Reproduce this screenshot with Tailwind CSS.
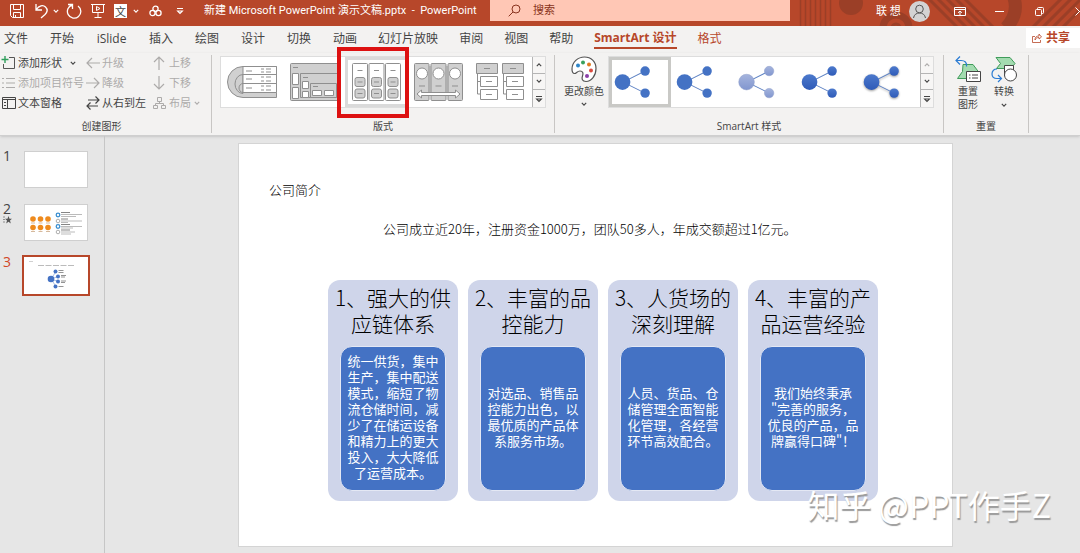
<!DOCTYPE html>
<html lang="zh-CN">
<head>
<meta charset="utf-8">
<title>新建 Microsoft PowerPoint 演示文稿.pptx - PowerPoint</title>
<script src="https://cdn.jsdelivr.net/npm/@tailwindcss/browser@4"></script>
</head>
<body class="relative flex min-h-screen flex-col overflow-x-hidden bg-[#e6e6e6] font-['Open_Sans','Noto_Sans_CJK_SC',sans-serif] text-[#444444]">

<svg class="absolute size-0" aria-hidden="true">
  <defs>
    <symbol id="down" viewBox="0 0 6 6"><path d="M.8 1.8 3 4.2 5.2 1.8" fill="none" stroke="currentColor" stroke-width="1.1"/></symbol>
    <symbol id="up" viewBox="0 0 6 6"><path d="M.8 4.2 3 1.8 5.2 4.2" fill="none" stroke="currentColor" stroke-width="1.1"/></symbol>
    <symbol id="more" viewBox="0 0 8 8"><path d="M1 1.5h6M1.6 4h4.8L4 6.4z" fill="none" stroke="currentColor" stroke-width="1.1"/></symbol>
    <symbol id="nodes" viewBox="0 0 62 50">
      <path d="M14 25 36 14M14 25l22 11" stroke="#5f83c4" stroke-width="1"/>
      <circle cx="13.500" cy="25" r="7.800"/><circle cx="36" cy="14" r="4.700"/><circle cx="36" cy="36" r="4.700"/>
    </symbol>
    <linearGradient id="soft" x1="0" y1="0" x2="0" y2="1"><stop offset="0" stop-color="#a5b4dd"/><stop offset="1" stop-color="#8196cf"/></linearGradient>
    <linearGradient id="deep" x1="0" y1="0" x2="0" y2="1"><stop offset="0" stop-color="#4c79cc"/><stop offset="1" stop-color="#2f5bb8"/></linearGradient>
  </defs>
</svg>

<header class="relative flex h-[26px] items-center overflow-hidden bg-[#b7472a] text-white">
  <svg class="absolute top-0 right-0 h-[26px] w-[290px]" viewBox="0 0 290 26" fill="none" stroke="#9b3f27" aria-hidden="true">
    <path d="M10.500 0v26M15.500 0v26M20.500 0v26M25.500 0v26M30.500 0v26M35.500 0v26M40.500 0v26" stroke-width="1.500"/>
    <circle cx="61" cy="3" r="12" fill="#9b3f27" stroke="none"/>
    <circle cx="106" cy="28" r="13" stroke-width="7"/><circle cx="106" cy="28" r="4" stroke-width="3"/>
    <path d="m138-2 30 30M147-2l30 30M156-2l30 30M165-2l30 30M174-2l30 30" stroke-width="3"/>
    <path d="M224-2q5 16-8 30" stroke-width="13"/>
    <path d="m242 28 30-30M252 28l30-30M262 28l30-30M272 28l30-30" stroke-width="3"/>
  </svg>
  <div class="relative flex w-[490px] shrink-0 items-center pb-[4px] pl-[9px]">
    <button aria-label="保存"><svg class="size-4" viewBox="0 0 16 16" fill="none" stroke="currentColor"><path d="M1.500 1.500h13v13h-11l-2-2zM4.500 1.500v5h7v-5M4.500 14.500v-5h7v5M6.500 12v2.500"/></svg></button>
    <button class="ml-[9px]" aria-label="撤消"><svg class="size-4" viewBox="0 0 16 16" fill="none" stroke="currentColor" stroke-width="1.300"><path d="M2 1v6h6M2.300 6.500C5 2.500 9 1.500 11.500 4s2 5-.5 7.500L7 15"/></svg></button>
    <svg class="ml-[3px] size-[6px]"><use href="#down"/></svg>
    <button class="ml-[7px]" aria-label="重做"><svg class="size-4" viewBox="0 0 16 16" fill="none" stroke="currentColor" stroke-width="1.300"><path d="M2 1.500h4.500V6M6.300 2A6.700 6.700 0 1 0 12 3"/></svg></button>
    <button class="ml-[9px]" aria-label="从头开始"><svg class="h-4 w-[14px]" viewBox="0 0 14 16" fill="none" stroke="currentColor"><path d="M0 1.500h14M1.500 1.500v8h11v-8M7 9.500v5M3.500 14.500h7"/><path d="M5.500 3.500v4L9 5.500z"/></svg></button>
    <button class="ml-[9px] flex h-[14px] w-[13px] items-center justify-center bg-white text-[11px] leading-none text-[#444]" aria-label="翻译">文</button>
    <svg class="ml-[6px] size-[6px]"><use href="#down"/></svg>
    <button class="ml-[10px]" aria-label="合并形状"><svg class="h-[12px] w-[13px]" viewBox="0 0 13 12" fill="none" stroke="currentColor" stroke-width="1.300"><circle cx="6.500" cy="3.700" r="2.600"/><circle cx="3.500" cy="8" r="2.600"/><circle cx="9.500" cy="8" r="2.600"/></svg></button>
    <button class="ml-[14px]" aria-label="自定义快速访问工具栏"><svg class="size-2"><use href="#more"/></svg></button>
    <h1 class="ml-[20px] font-[Roboto,'Noto_Sans_CJK_SC',sans-serif] text-[11px] leading-4 whitespace-nowrap">新建 Microsoft PowerPoint 演示文稿.pptx&nbsp; -&nbsp; PowerPoint</h1>
  </div>
  <label class="relative mb-[5px] flex h-[21px] flex-1 items-center bg-[#ffc7b5] pl-[18px] text-[#8a3420]">
    <svg class="size-[13px]" viewBox="0 0 13 13" fill="none" stroke="currentColor"><circle cx="8" cy="5" r="4"/><path d="M5 8 .7 12.300"/></svg>
    <input class="ml-[12px] min-w-0 flex-1 bg-transparent text-[11px] outline-none placeholder:text-[#8a3420]" type="text" aria-label="搜索" placeholder="搜索">
  </label>
  <div class="relative flex w-[290px] shrink-0 items-center pb-[4px] pl-[86px]">
    <span class="text-[11px] leading-4">联&nbsp;想</span>
    <button class="ml-[8px]" aria-label="账户"><svg class="size-[21px]" viewBox="0 0 21 21" fill="none" stroke="#555"><circle cx="10.500" cy="10.500" r="10.500" fill="#d3d3d3" stroke="none"/><circle cx="10.500" cy="8" r="3.800"/><path d="M4.500 17c.6-3.500 3-5 6-5s5.400 1.500 6 5"/></svg></button>
    <button class="ml-[24px]" aria-label="功能区显示选项"><svg class="h-[9px] w-[12px]" viewBox="0 0 12 9" fill="none" stroke="currentColor"><path d="M.5.5h11v8H.5zM.5 2.500h11M6 8V4M4 5.800 6 4l2 1.800"/></svg></button>
    <button class="ml-[29px]" aria-label="最小化"><svg class="h-[9px] w-[9px]" viewBox="0 0 9 9" stroke="currentColor"><path d="M0 4.500h9"/></svg></button>
    <button class="ml-[31px]" aria-label="还原"><svg class="size-[9px]" viewBox="0 0 9 9" fill="none" stroke="currentColor"><rect x=".5" y="2.500" width="6" height="6" rx="1"/><path d="M2.500 2.500V1.500q0-1 1-1h4q1 0 1 1v4q0 1-1 1h-1"/></svg></button>
    <button class="ml-[31px]" aria-label="关闭"><svg class="size-[9px]" viewBox="0 0 9 9" stroke="currentColor"><path d="m.5.5 8 8M8.500.5l-8 8"/></svg></button>
  </div>
</header>

<nav class="flex h-[27px] items-start justify-between bg-[#f3f2f1] pl-[4px]" aria-label="功能区选项卡">
  <div class="flex gap-[21px] pt-[3px] text-[12px] leading-[18px] whitespace-nowrap">
    <div class="flex gap-[22px]"><button>文件</button><button>开始</button><button class="w-[31px]">iSlide</button><button>插入</button><button>绘图</button><button>设计</button><button>切换</button><button>动画</button></div>
    <button>幻灯片放映</button><button>审阅</button><button>视图</button><button>帮助</button>
    <button class="border-b-2 border-[#b7472a] font-bold text-[#b7472a]">SmartArt 设计</button><button class="text-[#b7472a]">格式</button>
  </div>
  <button class="mt-[2px] flex h-5 w-[54px] items-center gap-[4px] overflow-hidden bg-white pl-[6px] text-[12px] font-bold whitespace-nowrap text-[#b7472a]">
    <svg class="h-[10px] w-[10px] shrink-0" viewBox="0 0 10 10" fill="none" stroke="currentColor"><path d="M3 3.500H.5v6h8V7M3 7c0-3 1.500-4 4-4V1l2.500 3L7 6V4.500C5 4.500 4 5 3 7z" stroke-width=".8"/></svg>共享
  </button>
</nav>

<section class="flex h-[83px] border-b border-[#cfcfcf] bg-[#f3f2f1] text-[11px] leading-4 shadow-sm" aria-label="SmartArt 设计">
  <div class="my-[2px] flex w-[212px] shrink-0 flex-col justify-between border-r border-[#c8c6c4]">
    <div class="grid grid-cols-[86px_67px_auto] gap-y-[4px] whitespace-nowrap">
      <button class="flex items-center gap-[2px]"><svg class="size-4" viewBox="0 0 16 16" fill="none" stroke="#555"><path d="M9 2.500h5.500v11h-11V9"/><path d="M5 1v7M1.500 4.500h7" stroke="#2f9e5b" stroke-width="1.400"/></svg>添加形状<svg class="ml-[6px] size-[6px]"><use href="#down"/></svg></button>
      <button class="flex items-center gap-[2px] text-[#adabaa]"><svg class="h-3 w-[14px]" viewBox="0 0 14 12" fill="none" stroke="currentColor" stroke-width="1.200"><path d="M14 6H1M6 1 1 6l5 5"/></svg>升级</button>
      <button class="flex items-center gap-[4px] text-[#adabaa]"><svg class="h-[14px] w-3" viewBox="0 0 12 14" fill="none" stroke="currentColor" stroke-width="1.200"><path d="M6 14V1M1 6l5-5 5 5"/></svg>上移</button>
      <button class="flex items-center gap-[2px] text-[#adabaa]"><svg class="h-3 w-4" viewBox="0 0 16 12" fill="none" stroke="currentColor" stroke-width="1.200"><path d="M2 1.500h2M2 6h2M2 10.500h2M6 1.500h9M6 6h9M6 10.500h9"/></svg>添加项目符号</button>
      <button class="flex items-center gap-[2px] text-[#adabaa]"><svg class="h-3 w-[14px]" viewBox="0 0 14 12" fill="none" stroke="currentColor" stroke-width="1.200"><path d="M0 6h13M8 1l5 5-5 5"/></svg>降级</button>
      <button class="flex items-center gap-[4px] text-[#adabaa]"><svg class="h-[14px] w-3" viewBox="0 0 12 14" fill="none" stroke="currentColor" stroke-width="1.200"><path d="M6 0v13M1 8l5 5 5-5"/></svg>下移</button>
      <button class="flex items-center gap-[2px]"><svg class="size-4" viewBox="0 0 16 16" fill="none" stroke="#444"><path d="M2.500 2.500h13v11h-13zM2.500 4.500h13M7.500 4.500v9M4 7.500h2M4 10.500h2"/></svg>文本窗格</button>
      <button class="flex items-center gap-[2px]"><svg class="h-[14px] w-[14px]" viewBox="0 0 14 14" fill="none" stroke="currentColor" stroke-width="1.200"><path d="M2 4h11M9.500.5 13 4 9.500 7.500M12 10H1M4.500 6.500 1 10l3.500 3.500"/></svg>从右到左</button>
      <button class="flex items-center gap-[3px] text-[#adabaa]"><svg class="h-3 w-[13px]" viewBox="0 0 13 12" fill="none" stroke="currentColor"><path d="M4.500.5h4v4h-4zM.5 8.500h4v3h-4zM8.500 8.500h4v3h-4zM6.500 4.500v2M2.500 8.500v-2h8v2"/></svg>布局<svg class="size-[6px]"><use href="#down"/></svg></button>
    </div>
    <div class="pr-[8px] text-center text-[10px] leading-[14px]">创建图形</div>
  </div>

  <div class="my-[2px] flex w-[343px] shrink-0 flex-col justify-between border-r border-[#c8c6c4] px-[8px] pt-[1px]">
    <div class="flex h-[52px] border border-[#dddddd] bg-white">
      <div class="grid flex-1 grid-cols-5 items-center justify-items-center">
        <button aria-label="版式一"><svg class="h-[32px] w-[50px]" viewBox="0 0 50 32" fill="#d0d0d0" stroke="#8f8f8f"><path d="M49.500.5H16a15.500 15.500 0 0 0 0 31h33.500z"/><path d="M16 8.500a8 9.500 0 0 0 0 19z"/><path d="M16 17.500a4 4.500 0 0 0 0 9z"/><path d="M16 .5h33.500v8H16zM16 8.500h33.500v9H16zM16 17.500h33.500v9H16z" fill="#fff"/><path d="M19 5h6M19 13h6M19 22h6M34 3h3M34 6h3M39 3h5M39 6h5M34 11h3M34 15h3M39 11h5M39 15h5M34 20h3M34 24h3M39 20h5M39 24h5"/></svg></button>
        <button aria-label="版式二"><svg class="h-[38px] w-[49px]" viewBox="0 0 49 38" fill="#d0d0d0" stroke="#8f8f8f"><rect x=".5" y=".5" width="48" height="37" rx="1"/><path d="M10.500 10.500h38v24h-38z"/><path d="M20.500 20.500h26v14h-26z"/><path d="M2.500 10.500h6v11h-6zM2.500 24.500h6v11h-6zM12.500 18.500h6v7h-6zM12.500 28.500h6v6h-6zM22.500 27.500h9v5h-9zM34.500 27.500h9v5h-9z" fill="#fff"/><path d="M3 4.500h5M13 14.500h5M23 23.500h5"/></svg></button>
        <button class="relative flex h-full w-full items-center justify-center border-[3px] border-[#dadada]" aria-label="版式三" aria-pressed="true"><svg class="h-[38px] w-[49px]" viewBox="0 0 49 38" fill="#fff" stroke="#8f8f8f"><rect x=".5" y=".5" width="15" height="37" rx="1"/><rect x="17" y=".5" width="15" height="37" rx="1"/><rect x="33.500" y=".5" width="15" height="37" rx="1"/><g fill="#d0d0d0"><rect x="3" y="14.500" width="10" height="9" rx="2"/><rect x="19.500" y="14.500" width="10" height="9" rx="2"/><rect x="36" y="14.500" width="10" height="9" rx="2"/><rect x="3" y="26" width="10" height="9" rx="2"/><rect x="19.500" y="26" width="10" height="9" rx="2"/><rect x="36" y="26" width="10" height="9" rx="2"/></g><path d="M5.500 7.500h5M22 7.500h5M38.500 7.500h5M5.500 19h5M22 19h5M38.500 19h5M5.500 30.500h5M22 30.500h5M38.500 30.500h5"/></svg>
          <span class="absolute -top-[13px] -right-[4px] -bottom-[14px] -left-[11px] border-4 border-[#dd1111]"></span></button>
        <button aria-label="版式四"><svg class="h-[38px] w-[49px]" viewBox="0 0 49 38" fill="#d0d0d0" stroke="#8f8f8f"><path d="M15 3h3v30h-3zM31 3h3v30h-3z" stroke="none"/><rect x=".5" y=".5" width="14.500" height="37" rx="1"/><rect x="17" y=".5" width="15" height="37" rx="1"/><rect x="34" y=".5" width="14.500" height="37" rx="1"/><g fill="#fff"><circle cx="8" cy="10.500" r="5.500"/><circle cx="24.500" cy="10.500" r="5.500"/><circle cx="41" cy="10.500" r="5.500"/><path d="m3 31 4.500-4v2.500h34V27l4.500 4-4.500 4v-2.500h-34V35z"/></g><path d="M5 23h6M21.500 23h6M38 23h6"/></svg></button>
        <button aria-label="版式五"><svg class="h-[38px] w-[49px]" viewBox="0 0 49 38" fill="#fff" stroke="#8f8f8f"><path d="M1.500 10.500v20.500h3M1.500 18.500h3M27.500 10.500v20.500h3M27.500 18.500h3" fill="none"/><path d="M.5.500h21v10h-21zM26.500.500h21v10h-21z" fill="#d0d0d0"/><path d="M4.500 13.500h17v10h-17zM4.500 26.500h17v10h-17zM30.500 13.500h17v10h-17zM30.500 26.500h17v10h-17z"/><path d="M8 5.500h6M34 5.500h6M10 18.500h6M10 31.500h6M36 18.500h6M36 31.500h6"/></svg></button>
      </div>
      <div class="grid w-[13px] grid-rows-3 divide-y divide-[#b5b5b5] border-l border-[#b5b5b5] bg-[#f7f6f5]">
        <button class="flex items-center justify-center" aria-label="上一行"><svg class="size-[6px]"><use href="#up"/></svg></button>
        <button class="flex items-center justify-center" aria-label="下一行"><svg class="size-[6px]"><use href="#down"/></svg></button>
        <button class="flex items-center justify-center" aria-label="更多版式"><svg class="size-2"><use href="#more"/></svg></button>
      </div>
    </div>
    <div class="text-center text-[10px] leading-[14px]">版式</div>
  </div>

  <div class="my-[2px] flex w-[389px] shrink-0 flex-col justify-between border-r border-[#c8c6c4] pt-[1px]">
    <div class="flex pr-[9px]">
      <button class="flex w-[53px] flex-col items-center pl-[5px] text-[10px] leading-4 whitespace-nowrap">
        <svg class="h-[27px] w-[26px]" viewBox="0 0 26 27" fill="#fff" stroke="#555" stroke-width="1.200"><path d="M1 13C1 6 7 1 13.500 1 20 1 25 5.500 25 12.500S20.500 25.500 15 25.500c-4 0-4.500-3-3.500-5.500s.5-5-2.500-5c-3 0-3.500 2.500-5.500 2.500-1.700 0-2.500-2-2.500-4.500z"/><g stroke="none"><circle cx="7" cy="9.500" r="2" fill="#2e86c9"/><circle cx="12" cy="6.500" r="2" fill="#38a05b"/><circle cx="18" cy="8.500" r="2" fill="#e07b20"/><circle cx="20" cy="14.500" r="2" fill="#d94b40"/><circle cx="16" cy="20" r="2" fill="#8b3fa8"/></g></svg>
        <span>更改颜色</span><svg class="mt-[2px] size-[6px]"><use href="#down"/></svg>
      </button>
      <div class="flex h-[52px] flex-1 border border-[#dddddd] bg-white">
        <div class="grid flex-1 grid-cols-5">
          <button class="border-[3px] border-[#c9c9c6]" aria-label="样式一" aria-pressed="true"><svg class="h-full w-full" viewBox="3 3 56 44" fill="#4472c4"><use href="#nodes" width="62" height="50"/></svg></button>
          <button aria-label="样式二"><svg class="h-full w-full" viewBox="0 0 62 50" fill="#4472c4"><use href="#nodes"/></svg></button>
          <button aria-label="样式三"><svg class="h-full w-full" viewBox="0 0 62 50" fill="url(#soft)" stroke="#8d9cc9" stroke-width=".5"><use href="#nodes"/></svg></button>
          <button aria-label="样式四"><svg class="h-full w-full" viewBox="0 0 62 50" fill="url(#deep)"><use href="#nodes"/></svg></button>
          <button aria-label="样式五"><svg class="h-full w-full drop-shadow-[0_1px_1px_#00000066]" viewBox="0 0 62 50" fill="url(#deep)"><use href="#nodes"/></svg></button>
        </div>
        <div class="grid w-[13px] grid-rows-3 divide-y divide-[#b5b5b5] border-l border-[#b5b5b5] bg-[#f7f6f5]">
          <button class="flex items-center justify-center text-[#adabaa]" aria-label="上一行" disabled><svg class="size-[6px]"><use href="#up"/></svg></button>
          <button class="flex items-center justify-center" aria-label="下一行"><svg class="size-[6px]"><use href="#down"/></svg></button>
          <button class="flex items-center justify-center" aria-label="更多样式"><svg class="size-2"><use href="#more"/></svg></button>
        </div>
      </div>
    </div>
    <div class="text-center text-[10px] leading-[14px]">SmartArt 样式</div>
  </div>

  <div class="my-[2px] flex w-[85px] shrink-0 flex-col justify-between border-r border-[#c8c6c4] pt-[1px]">
    <div class="flex justify-center gap-[10px] text-[10px] leading-[13px]">
      <button class="flex w-[26px] flex-col items-center"><svg class="mb-[2px] h-[27px] w-[26px]" viewBox="0 0 26 27" fill="#a3dbb0" stroke="#3f9c5a"><path d="M8 8.500h10l6 8-4 6H2.500l5-7z"/><path d="M11.500 15.500h14v10h-14z" fill="#fff" stroke="#444"/><path d="M14 19h1.500M14 22h1.500M17 19h6M17 22h6" stroke="#444"/><path d="M1 4.500h5c4 0 6 2 5.500 6M5 .5l-4 4 4 4" fill="none" stroke="#2b7cd3" stroke-width="1.200"/></svg>重置<br>图形</button>
      <button class="flex w-[26px] flex-col items-center"><svg class="mb-[2px] h-[27px] w-[26px]" viewBox="0 0 26 27" fill="#a3dbb0" stroke="#3f9c5a"><path d="M5 1.500h14l5 6-4 5H5.500l4-5z"/><path d="M13.500 9.500h9v10h-9z" fill="#fff" stroke="#444"/><circle cx="19.500" cy="19" r="6" fill="#fff" stroke="#444"/><path d="M6 13c-3 0-5 2-5 5s2 4.500 5 4.500h4M7 19l3.500 3.500L7 26" fill="none" stroke="#2b7cd3" stroke-width="1.200"/></svg>转换<svg class="mt-[4px] size-[6px]"><use href="#down"/></svg></button>
    </div>
    <div class="text-center text-[10px] leading-[14px]">重置</div>
  </div>
</section>

<div class="flex flex-1">
  <aside class="flex w-[105px] shrink-0 flex-col gap-[12px] border-r border-[#c6c6c6] pt-[13px] pl-[3px]" aria-label="幻灯片缩略图">
    <a href="#s1" class="flex items-start text-[14px] leading-[14px]"><span class="w-[19px]">1</span><span class="m-[2px] h-[37px] w-[64px] border border-[#cfcfcf] bg-white"></span></a>
    <a href="#s2" class="flex items-start text-[14px] leading-[14px]"><span class="w-[19px]">2<svg class="h-[8px] w-[9px]" viewBox="0 0 9 8" fill="#555"><path d="m5.500 0 1 2.700H9L7 4.500 7.800 7.500 5.500 5.800 3.200 7.500 4 4.500 2 2.700h2.500z"/><path d="M0 1h2M0 3.500h2M0 6h2" stroke="#555" stroke-width=".6"/></svg></span>
      <span class="m-[2px] h-[37px] w-[64px] border border-[#cfcfcf] bg-white"><svg class="h-full w-full" viewBox="0 0 62 35"><g fill="#ee8a1d"><circle cx="8" cy="14" r="2.800"/><circle cx="15.500" cy="14" r="2.800"/><circle cx="23" cy="14" r="2.800"/><circle cx="8" cy="22.500" r="2.800"/><circle cx="15.500" cy="22.500" r="2.800"/><circle cx="23" cy="22.500" r="2.800"/></g><path d="M6 18h4M13.500 18h4M21 18h4M6 26.500h4M13.500 26.500h4M21 26.500h4" stroke="#b98a5b" stroke-width=".6"/><g fill="#fff" stroke="#999" stroke-width=".8"><circle cx="33" cy="10" r="1.800" stroke="#3b8fd0" stroke-width="1.300"/><circle cx="33" cy="16" r="1.800"/><circle cx="33" cy="21.500" r="1.800" stroke="#3b8fd0" stroke-width="1.300"/><circle cx="33" cy="27" r="1.800"/></g><path d="M36 7.500h9M36 14h7M36 19.500h9M36 25h9" stroke="#666" stroke-width=".8"/><path d="M36 9.500h21M36 11.500h15M36 16h21M36 17.500h7M36 21.500h21M36 23h12M36 27h14M36 29h10" stroke="#aaa" stroke-width=".8"/></svg></span></a>
    <a href="#s3" class="flex items-start text-[14px] leading-[14px] text-[#d24726]" aria-current="true"><span class="w-[19px]">3</span><span class="h-[41px] w-[68px] border-2 border-[#b7472a] bg-white"><svg class="h-full w-full" viewBox="0 0 64 37"><path d="M5 4.500h4" stroke="#bbb" stroke-width=".7"/><path d="M14 8.500h36" stroke="#aaa" stroke-width=".8" stroke-dasharray="6 1.500"/><path d="m27 22 5-7.500M27 22l7-2.500M27 22l7 2.500M27 22l5 7.500" stroke="#6f90cf" stroke-width=".6"/><g fill="#4472c4"><circle cx="27" cy="22" r="3.300"/><circle cx="31.500" cy="14.500" r="2"/><circle cx="34" cy="19.500" r="2"/><circle cx="34" cy="24.500" r="2"/><circle cx="31.500" cy="29.500" r="2"/></g><path d="M34.500 13.500h5M34.500 15.500h5M37 18.500h5M37 20h4M37 24h5M37 25.500h4M34.500 29.500h5" stroke="#666" stroke-width=".7"/></svg></span></a>
  </aside>

  <main class="flex-1 pt-[7px] pr-[127px] pb-[6px] pl-[133px]">
    <article id="s3" class="flex h-full flex-col border border-[#d4d4d4] bg-white pb-[45px] font-['Noto_Sans_CJK_SC',sans-serif] text-black">
      <h2 class="pt-[37px] pl-[30px] text-[13px] leading-[18px] font-light">公司简介</h2>
      <p class="pt-[21px] pl-[144px] text-[13px] leading-[18px] font-light">公司成立近20年，注册资金1000万，团队50多人，年成交额超过1亿元。</p>
      <div class="mt-[42px] grid flex-1 grid-cols-4 gap-[10px] pr-[74px] pl-[89px]">
        <section class="flex flex-col rounded-[12px] bg-[#cfd5ea] px-[12px] pt-[4px] pb-[10px] text-center">
          <h3 class="-mx-[12px] text-[21px] leading-[26px] font-light">1、强大的供<br>应链体系</h3>
          <p class="mt-[10px] flex flex-1 flex-col justify-center rounded-[12px] border border-[#e4e8f4] bg-[#4472c4] pb-[4px] text-[13px] leading-[16px] whitespace-nowrap text-white"><span>统一供货，集中</span><span>生产，集中配送</span><span>模式，缩短了物</span><span>流仓储时间，减</span><span>少了在储运设备</span><span>和精力上的更大</span><span>投入，大大降低</span><span>了运营成本。</span></p>
        </section>
        <section class="flex flex-col rounded-[12px] bg-[#cfd5ea] px-[12px] pt-[4px] pb-[10px] text-center">
          <h3 class="-mx-[12px] text-[21px] leading-[26px] font-light">2、丰富的品<br>控能力</h3>
          <p class="mt-[10px] flex flex-1 flex-col justify-center rounded-[12px] border border-[#e4e8f4] bg-[#4472c4] pb-[4px] text-[13px] leading-[16px] whitespace-nowrap text-white"><span>对选品、销售品</span><span>控能力出色，以</span><span>最优质的产品体</span><span>系服务市场。</span></p>
        </section>
        <section class="flex flex-col rounded-[12px] bg-[#cfd5ea] px-[12px] pt-[4px] pb-[10px] text-center">
          <h3 class="-mx-[12px] text-[21px] leading-[26px] font-light">3、人货场的<br>深刻理解</h3>
          <p class="mt-[10px] flex flex-1 flex-col justify-center rounded-[12px] border border-[#e4e8f4] bg-[#4472c4] pb-[4px] text-[13px] leading-[16px] whitespace-nowrap text-white"><span>人员、货品、仓</span><span>储管理全面智能</span><span>化管理，各经营</span><span>环节高效配合。</span></p>
        </section>
        <section class="flex flex-col rounded-[12px] bg-[#cfd5ea] px-[12px] pt-[4px] pb-[10px] text-center">
          <h3 class="-mx-[12px] text-[21px] leading-[26px] font-light">4、丰富的产<br>品运营经验</h3>
          <p class="mt-[10px] flex flex-1 flex-col justify-center rounded-[12px] border border-[#e4e8f4] bg-[#4472c4] pb-[4px] text-[13px] leading-[16px] whitespace-nowrap text-white"><span>我们始终秉承</span><span>"完善的服务，</span><span>优良的产品，品</span><span>牌赢得口碑"！</span></p>
        </section>
      </div>
    </article>
  </main>
</div>

<div class="pointer-events-none absolute right-[29px] bottom-[27px] font-['Noto_Sans_CJK_SC',sans-serif] text-[32px] leading-[44px] whitespace-nowrap text-white [text-shadow:1px_2px_1px_#999999]">知乎 @PPT作手Z</div>
</body>
</html>
